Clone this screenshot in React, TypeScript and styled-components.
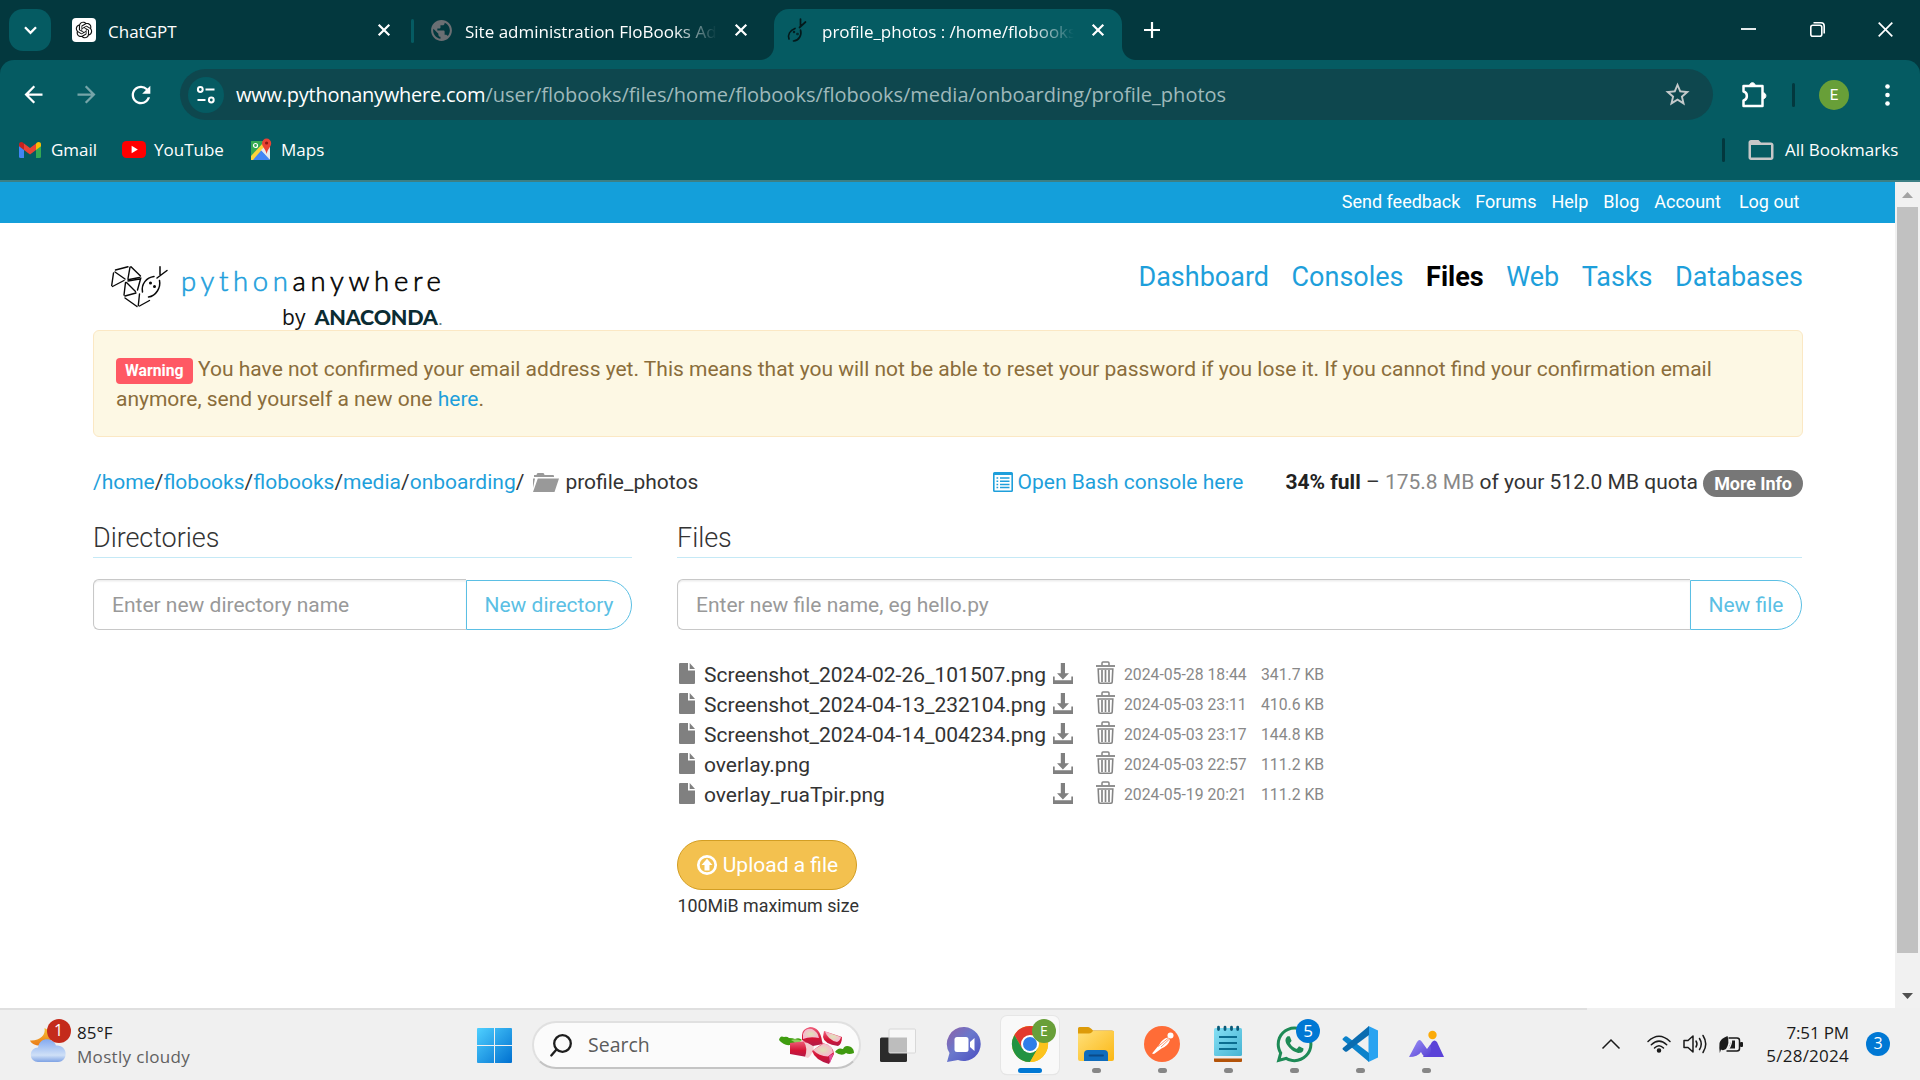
import React from "react";
import styled, { createGlobalStyle } from "styled-components";
import { RiOpenaiFill } from "react-icons/ri";
import { MdPublic, MdArrowBack, MdArrowForward, MdRefresh, MdStarBorder, MdFolderOpen } from "react-icons/md";
import { FaWhatsapp } from "react-icons/fa";

const UI = `"Open Sans", "Noto Sans", sans-serif`;
const WEB = `Roboto, "Liberation Sans", sans-serif`;

const Global = createGlobalStyle`
  * { box-sizing: border-box; }
  html, body { margin: 0; padding: 0; background: #fff; }
  body { width: 1920px; height: 1080px; overflow: hidden; }
  svg { display: block; flex: none; overflow: visible; }
`;

const Screen = styled.div`
  width: 1920px;
  height: 1080px;
  display: flex;
  flex-direction: column;
  overflow: hidden;
`;

/* ---------- browser chrome ---------- */

const TabStrip = styled.div`
  height: 60px;
  flex: none;
  display: flex;
  align-items: flex-start;
  background: #03383e;
  padding: 9px 0 0 9px;
  font-family: ${UI};
`;

const TabSearch = styled.div`
  width: 42px;
  height: 42px;
  border-radius: 14px;
  background: #055b62;
  display: flex;
  align-items: center;
  justify-content: center;
`;

const Tab = styled.div<{ $width: number; $active?: boolean; $pad: number; $end?: number }>`
  position: relative;
  width: ${(p) => p.$width}px;
  height: 51px;
  display: flex;
  align-items: flex-start;
  padding: 9px ${(p) => p.$end ?? 18}px 0 ${(p) => p.$pad}px;
  border-radius: 15px 15px 0 0;
  background: ${(p) => (p.$active ? "#055b62" : "transparent")};
  &::before,
  &::after {
    content: "";
    display: ${(p) => (p.$active ? "block" : "none")};
    position: absolute;
    bottom: 0;
    width: 14px;
    height: 14px;
  }
  &::before {
    left: -14px;
    background: radial-gradient(circle at 0 0, transparent 13.5px, #055b62 14.5px);
  }
  &::after {
    right: -14px;
    background: radial-gradient(circle at 100% 0, transparent 13.5px, #055b62 14.5px);
  }
`;

const TabIcon = styled.div<{ $gap: number }>`
  width: 24px;
  height: 24px;
  flex: none;
  margin-right: ${(p) => p.$gap}px;
`;

const OpenAiTile = styled.div`
  width: 24px;
  height: 24px;
  border-radius: 4px;
  background: #fff;
  color: #111;
  display: flex;
  align-items: center;
  justify-content: center;
`;

const TabTitle = styled.div<{ $fade?: boolean }>`
  flex: 1;
  height: 26px;
  margin-top: 1px;
  line-height: 26px;
  font-size: 17px;
  color: #fff;
  white-space: nowrap;
  overflow: hidden;
  ${(p) => p.$fade && "mask-image: linear-gradient(90deg, #000 calc(100% - 44px), transparent);"}
`;

const CloseMark = styled.div<{ $gap: number }>`
  margin: 6px 0 0 ${(p) => p.$gap}px;
  width: 12px;
`;

const TabDivider = styled.div`
  width: 3px;
  height: 24px;
  margin-top: 10px;
  border-radius: 2px;
  background: #055b62;
`;

const NewTab = styled.div`
  margin: 13px 0 0 22px;
`;

const WindowControls = styled.div`
  margin: 13px 27px 0 auto;
  display: flex;
  gap: 53.5px;
`;

const ToolbarShell = styled.div`
  flex: none;
  background: #03383e;
`;

const ToolbarPanel = styled.div`
  height: 122px;
  border-radius: 14px 14px 0 0;
  background: #055b62;
  border-bottom: 2px solid #3d7f84;
  font-family: ${UI};
`;

const NavRow = styled.div`
  height: 69px;
  display: flex;
  align-items: center;
  padding-left: 20px;
  color: #fff;
`;

const NavButton = styled.div<{ $dim?: boolean; $gap: number }>`
  width: 27px;
  height: 27px;
  margin-right: ${(p) => p.$gap}px;
  opacity: ${(p) => (p.$dim ? 0.45 : 1)};
`;

const Omnibox = styled.div`
  width: 1533px;
  height: 51px;
  border-radius: 26px;
  background: #0e474e;
  display: flex;
  align-items: center;
  padding: 0 21px 0 8px;
`;

const SiteInfo = styled.div`
  width: 36px;
  height: 36px;
  border-radius: 50%;
  background: #055b62;
  display: flex;
  align-items: center;
  justify-content: center;
  margin-right: 12px;
`;

const Url = styled.div`
  flex: 1;
  font-size: 20px;
  line-height: 30px;
  color: #9fb9bb;
  white-space: nowrap;
  letter-spacing: 0.008px;
  b {
    font-weight: 400;
    letter-spacing: -0.25px;
    color: #fff;
  }
`;

const VerticalRule = styled.div<{ $margin: string }>`
  width: 3px;
  height: 24px;
  flex: none;
  border-radius: 2px;
  background: #03383e;
  margin: ${(p) => p.$margin};
`;

const Avatar = styled.div`
  width: 30px;
  height: 30px;
  border-radius: 50%;
  background: #689f38;
  color: #fff;
  font: 15px/30px ${WEB};
  text-align: center;
`;

const BookmarkRow = styled.div`
  height: 41px;
  display: flex;
  align-items: center;
  padding-left: 18px;
  color: #fff;
  font-size: 17px;
  line-height: 24px;
`;

const Bookmark = styled.div<{ $width: number; $gap: number; $pad?: number }>`
  width: ${(p) => p.$width}px;
  padding-left: ${(p) => p.$pad ?? 0}px;
  flex: none;
  display: flex;
  align-items: center;
  gap: ${(p) => p.$gap}px;
  white-space: nowrap;
`;

/* ---------- web page ---------- */

const Viewport = styled.div`
  height: 826px;
  flex: none;
  display: flex;
`;

const Page = styled.div`
  width: 1895px;
  background: #fff;
  font: 21px/30px ${WEB};
  color: #333;
`;

const AccountBar = styled.div`
  height: 41px;
  background: #149fda;
  display: flex;
  justify-content: flex-end;
  align-items: center;
  gap: 15px;
  padding: 0 95.5px 2px 0;
  font-size: 18px;
  color: #fff;
`;

const AccountLink = styled.span<{ $extra?: number }>`
  margin-left: ${(p) => p.$extra ?? 0}px;
`;

const Content = styled.div`
  margin-left: 93px;
  width: 1710px;
`;

const Header = styled.div`
  height: 107px;
  display: flex;
  justify-content: space-between;
`;

const Brand = styled.div`
  display: flex;
  padding: 43px 0 0 18px;
`;

const Wordmark = styled.div`
  width: 261px;
  margin-left: 12px;
  display: flex;
  flex-direction: column;
`;

const WordName = styled.div`
  font: 300 27.5px/29px Lato, "Open Sans", sans-serif;
  letter-spacing: 4.65px;
  color: #000;
  white-space: nowrap;
  -webkit-text-stroke: 0.6px currentColor;
  span {
    color: #1f9fdc;
    -webkit-text-stroke: 0.6px #1f9fdc;
  }
`;

const WordOwner = styled.div`
  margin-top: 10px;
  align-self: flex-end;
  display: flex;
  align-items: baseline;
  font: 21px/25px "Open Sans", sans-serif;
  color: #111;
  b {
    margin-left: 9px;
    font: 900 21.5px/25px Lato, sans-serif;
    letter-spacing: -0.25px;
    color: #0b2c33;
  }
  i {
    margin-left: 1px;
    font: 700 14px/25px Lato, sans-serif;
    color: #6f8285;
  }
`;

const MainNav = styled.nav`
  display: flex;
  gap: 22.5px;
  padding-top: 35px;
  font-size: 27px;
  line-height: 38px;
`;

const MainLink = styled.span<{ $active?: boolean }>`
  color: ${(p) => (p.$active ? "#000" : "#1e9fdb")};
  font-weight: ${(p) => (p.$active ? 700 : 400)};
`;

const Alert = styled.div`
  height: 107px;
  padding: 23px 22px;
  border: 1px solid #fbe8c4;
  border-radius: 6px;
  background: #fdf8e4;
  color: #8a6d3b;
`;

const WarningTag = styled.span`
  display: inline-block;
  height: 26px;
  padding: 0 9px;
  margin-right: 5.5px;
  border-radius: 4px;
  background: #ff5964;
  color: #fff;
  font-size: 15.75px;
  font-weight: 700;
  line-height: 25px;
`;

const Link = styled.span`
  color: #1e9fdb;
`;

const PathRow = styled.div`
  margin-top: 30px;
  height: 30px;
  display: flex;
  white-space: nowrap;
`;

const Crumbs = styled.div`
  flex: 1;
  display: flex;
  align-items: center;
`;

const Current = styled.span`
  margin-left: 6px;
`;

const ConsoleLink = styled.div`
  display: flex;
  align-items: center;
  gap: 5px;
  margin-right: 42px;
  color: #1e9fdb;
`;

const Quota = styled.div`
  display: flex;
  align-items: center;
  white-space: pre;
  b {
    color: #222;
  }
  span {
    color: #888;
  }
`;

const InfoBadge = styled.div`
  width: 100px;
  height: 27px;
  margin: 3px 0 0 5px;
  border-radius: 14px;
  background: #777;
  color: #fff;
  font-size: 18px;
  font-weight: 700;
  line-height: 27px;
  text-align: center;
  letter-spacing: -0.1px;
`;

const Columns = styled.div`
  margin-top: 20px;
  display: grid;
  grid-template-columns: 539px 1125px;
  column-gap: 45px;
`;

const Heading = styled.h2`
  margin: 0 0 21px;
  padding-top: 2px;
  border-bottom: 1px solid #c5e9f6;
  font-size: 27px;
  font-weight: 300;
  line-height: 38px;
  letter-spacing: -0.05px;
  color: #333;
`;

const InputGroup = styled.div`
  height: 51px;
  display: flex;
`;

const FakeInput = styled.div`
  flex: 1;
  border: 1px solid #c8c8c8;
  border-right: 0;
  border-radius: 6px 0 0 6px;
  box-shadow: inset 0 1.5px 1.5px rgba(0, 0, 0, 0.075);
  padding-left: 18px;
  line-height: 50px;
  color: #999;
`;

const OutlineButton = styled.div<{ $width: number }>`
  width: ${(p) => p.$width}px;
  height: 50px;
  margin-top: 1px;
  border: 1px solid #5bbfe4;
  border-radius: 0 25px 25px 0;
  color: #5bbfe4;
  line-height: 48px;
  text-align: center;
`;

const FileList = styled.div`
  margin-top: 30px;
`;

const FileRow = styled.div`
  height: 30px;
  display: grid;
  grid-template-columns: 27px 348px 44px 28px 137px 100px;
  align-items: center;
  white-space: nowrap;
`;

const IconCell = styled.div<{ $pad?: number; $shift?: number }>`
  padding-left: ${(p) => p.$pad ?? 0}px;
  margin-top: ${(p) => p.$shift ?? -3}px;
`;

const Meta = styled.div`
  font-size: 15.75px;
  color: #888;
  margin-top: -1px;
`;

const UploadButton = styled.div`
  margin-top: 30px;
  width: 180px;
  height: 50px;
  border: 1.5px solid #d39e23;
  border-radius: 25px;
  background: #f3c14f;
  color: #fff;
  display: flex;
  align-items: center;
  justify-content: center;
  gap: 6px;
  padding-left: 1px;
`;

const Hint = styled.div`
  margin-top: 3px;
  padding-left: 0.5px;
  font-size: 17.85px;
  line-height: 26px;
`;

const ScrollTrack = styled.div`
  width: 25px;
  background: #f1f1f1;
  display: flex;
  flex-direction: column;
  align-items: center;
`;

const Arrow = styled.div<{ $down?: boolean }>`
  height: 25px;
  flex: none;
  padding-top: ${(p) => (p.$down ? 10 : 10)}px;
`;

const Thumb = styled.div`
  width: 21px;
  height: 746px;
  flex: none;
  margin-bottom: 30px;
  background: #c1c1c1;
`;

/* ---------- taskbar ---------- */

const Taskbar = styled.div`
  position: relative;
  height: 72px;
  flex: none;
  display: flex;
  align-items: center;
  padding-top: 2px;
  background: #f0f0f0;
  font-family: ${UI};
  &::before {
    content: "";
    position: absolute;
    top: 0;
    left: 0;
    width: 1587px;
    height: 2px;
    background: #dfdfdf;
  }
`;

const Weather = styled.div`
  width: 477px;
  flex: none;
  padding-left: 30px;
  display: flex;
  gap: 11px;
  align-items: center;
`;

const Stack = styled.div<{ $align?: string; $lh: number }>`
  display: flex;
  flex-direction: column;
  text-align: ${(p) => p.$align ?? "left"};
  font-size: 17px;
  line-height: ${(p) => p.$lh}px;
  color: #1a1a1a;
  white-space: nowrap;
`;

const Line = styled.span<{ $muted?: boolean; $spacing?: number }>`
  color: ${(p) => (p.$muted ? "#606060" : "#1a1a1a")};
  letter-spacing: ${(p) => p.$spacing ?? 0}px;
`;

const Badge = styled.div<{ $bg: string; $float?: boolean; $size?: number; $right?: number; $top?: number }>`
  ${(p) => p.$float && `position: absolute; top: ${p.$top ?? -7}px; right: ${p.$right ?? -8}px;`}
  width: 24px;
  height: 24px;
  border-radius: 50%;
  background: ${(p) => p.$bg};
  color: #fff;
  font-size: ${(p) => p.$size ?? 16}px;
  line-height: 23px;
  text-align: center;
`;

const AppIcon = styled.div`
  position: relative;
  width: 36px;
  height: 36px;
  display: flex;
  align-items: center;
  justify-content: center;
`;

const SearchBox = styled.div`
  width: 329px;
  height: 48px;
  flex: none;
  margin: 0 19px 0 20px;
  border: 2px solid #e0e0e0;
  border-bottom-color: #c4c4c4;
  border-radius: 24px;
  background: #fbfbfb;
  display: flex;
  align-items: center;
  padding: 0 5px 0 16px;
  color: #5c5c5c;
  font-size: 19.5px;
`;

const SearchLabel = styled.span`
  flex: 1;
  margin-left: 16px;
  line-height: 28px;
`;

const AppRow = styled.div`
  display: flex;
  margin-left: 19px;
`;

const Slot = styled.div<{ $active?: boolean }>`
  width: 58px;
  height: 58px;
  margin: 0 8px 0 0;
  display: flex;
  flex-direction: column;
  align-items: center;
  padding-top: 10px;
  border-radius: 6px;
  background: ${(p) => (p.$active ? "#f9f9f9" : "transparent")};
  box-shadow: ${(p) => (p.$active ? "0 0 0 1px #e6e6e6, 0 1px 1px #d8d8d8" : "none")};
`;

const Running = styled.div<{ $state: "none" | "open" | "focused" }>`
  width: ${(p) => (p.$state === "focused" ? 24 : 9)}px;
  height: 5px;
  margin-top: 6px;
  border-radius: 3px;
  background: ${(p) => (p.$state === "focused" ? "#0078d4" : p.$state === "open" ? "#868686" : "transparent")};
`;

const Tray = styled.div`
  margin-left: auto;
  padding: 0 30px 2px 0;
  display: flex;
  align-items: center;
`;

const Inset = styled.div<{ $margin: string }>`
  margin: ${(p) => p.$margin};
`;

/* ---------- drawings ---------- */

const Cross = ({ size = 12, w = 2.2 }: { size?: number; w?: number }) => (
  <svg width={size} height={size} viewBox={`0 0 ${size} ${size}`} stroke="#fff" strokeWidth={w} fill="none">
    <path d={`M.7 .7 L${size - 0.7} ${size - 0.7} M${size - 0.7} .7 L.7 ${size - 0.7}`} />
  </svg>
);

const SnakeFavicon = () => (
  <svg width="24" height="24" viewBox="0 0 24 24" fill="none" stroke="#04191b" strokeWidth="1.7" strokeLinecap="round">
    <path d="M12.500 1v6.500M17.500 4l-6 5.500M7 10.500C2 12.500-.5 16.500 1 21M12.500 12c1.500 5-1.500 10.500-7 11" />
    <circle cx="6" cy="14" r=".4" />
    <circle cx="9.500" cy="16" r=".4" />
  </svg>
);

const TuneIcon = () => (
  <svg width="19" height="18" viewBox="0 0 19 18" fill="none" stroke="#fff" strokeWidth="2">
    <circle cx="3.300" cy="3.500" r="2.400" />
    <path d="M8.500 3.500h9M.5 14h8" />
    <circle cx="14.300" cy="14" r="2.400" />
  </svg>
);

const PuzzleIcon = () => (
  <svg width="26" height="26" viewBox="0 0 26 26" fill="none" stroke="#fff" strokeWidth="2.5" strokeLinejoin="round">
    <path d="M2.500 4H21.500V24H2.500V18.500C7 17.500 7 10.500 2.500 9.500Z" />
    <path d="M8.600 3.600C8.800-.3 14 -.3 14.200 3.600ZM22.200 10.800c3.600.2 3.600 5.800 0 6Z" fill="#fff" strokeWidth="1" />
  </svg>
);

const GmailIcon = () => (
  <svg width="22" height="16" viewBox="0 0 22 16">
    <path d="M0 3v11.500Q0 16 1.500 16H5V7Z" fill="#4285f4" />
    <path d="M17 7v9h3.500q1.500 0 1.500-1.500V3Z" fill="#34a853" />
    <path d="M5 1.500 11 6l6-4.500V8l-6 4.500L5 8Z" fill="#ea4335" />
    <path d="M0 2.500C0 0 2.600-.5 4 .6L5 1.500V8L0 4.300Z" fill="#c5221f" />
    <path d="M22 2.500c0-2.500-2.600-3-4-1.900l-1 .9V8l5-3.700Z" fill="#fbbc04" />
  </svg>
);

const YouTubeIcon = () => (
  <svg width="24" height="17" viewBox="0 0 24 17">
    <rect width="24" height="17" rx="4.5" fill="#f00" />
    <path d="M9.600 4.800v7.400l6.200-3.700Z" fill="#fff" />
  </svg>
);

const MapsIcon = () => (
  <svg width="22" height="23" viewBox="0 0 22 23">
    <rect x="1" y="3" width="19" height="19" rx="1.5" fill="#d9dde1" />
    <path d="M1 3h14L1 20Z" fill="#34a853" />
    <path d="M1 22 11 12l9 10Z" fill="#4285f4" />
    <path d="M1 18 14 4l2 3L3 22H1Z" fill="#fdd33c" />
    <path d="M11 12 16 8l4 4v9Z" fill="#e6e9ec" />
    <circle cx="5.500" cy="7.500" r="2" fill="none" stroke="#fff" strokeWidth="1.2" />
    <path d="M12 5.200a4.600 4.600 0 0 1 9.200 0c0 3.500-3.600 5.300-4.600 10.800C15.600 10.500 12 8.700 12 5.200Z" fill="#ea4335" />
    <circle cx="16.600" cy="5" r="1.600" fill="#8e1b13" />
  </svg>
);

const SnakeLogo = () => (
  <svg width="58" height="42" viewBox="0 0 58 42" fill="none" stroke="#0a0a0a" strokeWidth="1.4" strokeLinecap="round">
    <path d="M4.500 4 17 .8M20 .7 29.500 10M19 1.200 17 12.500M4 6 14 13M2.500 7 .7 19.500M1.500 20.500 13 14.500M17 13.700 28.500 11.500" />
    <path d="M14.500 16.500 13 29M15.500 16.500 24.500 25.500M29.800 12 26.500 24M28.500 13 17 15M14 30 25 27M14 32 26 40.500M28.500 28 27.300 39.500M28.500 40 38.500 34.500" />
    <path d="M43 10.500C35.500 11.500 30 18 31.500 26M48.500 14.500c1.500 7-3.500 15.500-11 16.500M49 .8v7.700M56 4.500 46 12" strokeWidth="1.5" />
    <circle cx="39.500" cy="17" r=".8" fill="#000" />
    <circle cx="43.500" cy="20.500" r=".8" fill="#000" />
  </svg>
);

const FolderOpenGlyph = () => (
  <svg width="26" height="19" viewBox="0 0 26 19" fill="#999">
    <path d="M1 4V2h2.500L4 .5Q4.300 0 5 0h5q.7 0 1 .6L11.500 2H20q1 0 1 1v1Z" />
    <path d="M0 5.500h2L0 15ZM4.800 5.500H26L21.500 19H0Z" />
  </svg>
);

const ConsoleGlyph = () => (
  <svg width="20" height="20" viewBox="0 0 20 20">
    <path fillRule="evenodd" fill="#1e9fdb" d="M1.500 0h17Q20 0 20 1.500v17q0 1.500-1.500 1.500h-17Q0 20 0 18.500v-17Q0 0 1.500 0ZM1.600 3v15.400h16.800V3Z" />
    <path d="M3.500 6h1.700M7 6h9.500M3.500 9.200h1.700M7 9.200h9.500M3.500 12.400h1.700M7 12.400h9.500M3.500 15.600h1.700M7 15.600h9.500" stroke="#1e9fdb" strokeWidth="1.5" />
  </svg>
);

const FileGlyph = () => (
  <svg width="16" height="21" viewBox="0 0 16 21" fill="#808080">
    <path d="M0 1Q0 0 1 0h8v7.500h7V20q0 1-1 1H1q-1 0-1-1Z" />
    <path d="M10.700 0 16 6H10.700Z" />
  </svg>
);

const DownloadGlyph = () => (
  <svg width="20" height="21" viewBox="0 0 20 21" fill="#808080">
    <path d="M7.800 0h4.200v10.200h4L9.900 16.500 4 10.200h3.800Z" />
    <path d="M0 13.500h1.700V17.200h16.600v-3.700H20V21H0Z" />
  </svg>
);

const TrashGlyph = () => (
  <svg width="19" height="23" viewBox="0 0 19 23" fill="none" stroke="#858585">
    <path d="M6 4.500V2Q6 .9 7 .9h5q1 0 1 1.100v2.500" strokeWidth="1.5" />
    <path d="M0 5h19" strokeWidth="1.8" />
    <path d="M2.200 8h14.600L16.200 21q0 1.200-1.200 1.200H4Q2.800 22.200 2.800 21Z" strokeWidth="1.6" />
    <path d="M6 9v12M9.500 9v12M13 9v12" strokeWidth="1.7" />
  </svg>
);

const UploadGlyph = () => (
  <svg width="20" height="20" viewBox="0 0 20 20">
    <circle cx="10" cy="10" r="8.700" fill="none" stroke="#fff" strokeWidth="2.7" />
    <path d="M10 3.800 15.500 10H12.500v5.500h-5V10h-3Z" fill="#fff" />
  </svg>
);

const WeatherIcon = () => (
  <svg width="36" height="36" viewBox="0 0 36 36">
    <defs>
      <linearGradient id="moon" x1="0" y1="0" x2="0" y2="1">
        <stop offset="0" stopColor="#f7c234" />
        <stop offset="1" stopColor="#ea7a17" />
      </linearGradient>
      <linearGradient id="cloud" x1="0" y1="0" x2="0" y2="1">
        <stop offset="0" stopColor="#84aaf0" />
        <stop offset=".7" stopColor="#cfe0f7" />
        <stop offset="1" stopColor="#7ea2e4" />
      </linearGradient>
    </defs>
    <path d="M14.500 1C16 8 10 14 0 13.500 3 20 16 21 22 12L18 3Z" fill="url(#moon)" />
    <path d="M8 35a7 7 0 0 1 0-14.500C9.500 10 23 10 26 18.500c12-1 13 16 2 16.500Z" fill="url(#cloud)" />
  </svg>
);

const WindowsLogo = () => (
  <svg width="35" height="35" viewBox="0 0 35 35">
    <defs>
      <linearGradient id="win" x1="0" y1="0" x2="1" y2="1">
        <stop offset="0" stopColor="#4fd0ff" />
        <stop offset="1" stopColor="#0070d0" />
      </linearGradient>
    </defs>
    <path d="M1 0h16v17H0V1Q0 0 1 0ZM18 0h16q1 0 1 1v16H18ZM0 18h17v17H1q-1 0-1-1ZM18 18h17v16q0 1-1 1H18Z" fill="url(#win)" />
  </svg>
);

const Magnifier = () => (
  <svg width="22" height="23" viewBox="0 0 22 23" fill="none" stroke="#1d1d1d" strokeWidth="2.3" strokeLinecap="round">
    <circle cx="12.500" cy="9.500" r="8.300" />
    <path d="M6.500 15.500 1.300 21.500" />
  </svg>
);

const Radishes = () => (
  <svg width="75" height="37" viewBox="0 0 75 37">
    <defs>
      <radialGradient id="flesh">
        <stop offset="0" stopColor="#dfe3b8" />
        <stop offset="1" stopColor="#f7b6cd" />
      </radialGradient>
      <linearGradient id="skin" x1="0" y1="0" x2="0" y2="1">
        <stop offset="0" stopColor="#f0607c" />
        <stop offset=".6" stopColor="#d31334" />
        <stop offset="1" stopColor="#b01a4a" />
      </linearGradient>
    </defs>
    <path d="M0 13q1-5 5-3 3-1 5 1 4 0 6 1 4-2 7 1l-5 3q-4-1-7 2-6 1-11-5Z" fill="#3f9d10" />
    <path d="M12 13q5-2 11 1l-6 2Z" fill="#8fcf5c" />
    <path d="M56 25q3-5 8-3 2-5 8-2 3 2 3 6-5 2-8 0-4 4-11-1Z" fill="#3f9a10" />
    <path d="M11 16 27 14q4 6 1 16L11 27Z" fill="url(#skin)" />
    <path d="M25 15q4 6 1 15l3 1q5-4 6-12Z" fill="#f3cdd0" />
    <path d="M23 8q0-6 8-8 10 0 12 14l1 3-10 2-11-6Z" fill="url(#skin)" />
    <path d="M24 7q2-6 9-5 6 3 7 9-9-2-16 1Z" fill="url(#flesh)" />
    <path d="M45 4 63 10q0 7-4 9-14-2-15-9Z" fill="url(#skin)" />
    <path d="M46 4.500 62 10q-1 4-4 5-9-2-12-10.500Z" fill="url(#flesh)" />
    <path d="M33 24 44 16q11 3 11 11l-5 10Q36 33 33 24Z" fill="url(#skin)" />
    <path d="M34 23 45 16.500q9 2 9 9l-5 4Q40 29 34 23Z" fill="url(#flesh)" />
    <path d="M50 29l4.500-2.500L51 36Z" fill="#e2509c" />
  </svg>
);

const TaskView = () => (
  <svg width="36" height="35" viewBox="0 0 36 35">
    <rect x="0" y="9.500" width="27" height="24.500" rx="1.500" fill="#2b2b2b" />
    <rect x="9" y="1" width="26.500" height="24" rx="1" fill="#f7f7f7" stroke="#d8d8d8" />
    <path d="M9 9.500h18V24.500H9Z" fill="#bdbdbd" />
  </svg>
);

const ChatIcon = () => (
  <svg width="35" height="36" viewBox="0 0 35 36">
    <defs>
      <linearGradient id="chat" x1="0" y1="0" x2="1" y2="1">
        <stop offset="0" stopColor="#9060a6" />
        <stop offset=".45" stopColor="#6a78cc" />
        <stop offset="1" stopColor="#4a4cc0" />
      </linearGradient>
    </defs>
    <path d="M17.500 1a17 17 0 1 1-6.500 33L0 36 2.500 27A17 17 0 0 1 17.500 1Z" fill="url(#chat)" />
    <rect x="7.500" y="11" width="14" height="15" rx="2.500" fill="#fff" />
    <path d="M23 16l4.500-4v13L23 21Z" fill="#fff" />
  </svg>
);

const ChromeIcon = () => (
  <svg width="36" height="36" viewBox="0 0 36 36">
    <circle cx="18" cy="18" r="18" fill="#fbbc05" />
    <path d="M2.400 9A18 18 0 0 1 33.600 9H18L10.200 22.500Z" fill="#e23a2e" />
    <path d="M2.400 9A18 18 0 0 0 18 36L25.800 22.500 10.200 22.500Z" fill="#229342" />
    <path d="M18 36A18 18 0 0 0 33.600 9H18L25.800 22.500Z" fill="#fcc31e" />
    <circle cx="18" cy="18" r="9" fill="#fff" />
    <circle cx="18" cy="18" r="7" fill="#2f7de9" />
  </svg>
);

const ExplorerIcon = () => (
  <svg width="36" height="34" viewBox="0 0 36 34">
    <defs>
      <linearGradient id="fold" x1="0" y1="0" x2="1" y2="1">
        <stop offset="0" stopColor="#ffe07a" />
        <stop offset="1" stopColor="#fbb714" />
      </linearGradient>
    </defs>
    <path d="M0 1.500Q0 0 1.500 0H10q2 0 5 3.500H34q2 0 2 2V10H0Z" fill="#dd9b09" />
    <path d="M0 6.500h11Q13 6.500 15 4h21v28q0 2-2 2H2q-2 0-2-2Z" fill="url(#fold)" />
    <path d="M6 34V27q0-4 4-4h16q4 0 4 4v7Z" fill="#0f6cbd" />
    <path d="M11.500 28.500h13.500" stroke="#0b4a88" strokeWidth="1.8" strokeLinecap="round" />
  </svg>
);

const PostmanIcon = () => (
  <svg width="36" height="36" viewBox="0 0 36 36">
    <circle cx="18" cy="18" r="18" fill="#ff6c37" />
    <circle cx="26.500" cy="9.500" r="3" fill="#fff" />
    <path d="M15 19q3-6 8.500-7.500l2.500 2.500q-2 6-8.500 8.500L10 28l-2-.5Z" fill="#fff" />
    <path d="M14 20.500 24 12.500M17 21 25 13.500" stroke="#ff6c37" strokeWidth=".7" />
  </svg>
);

const NotepadIcon = () => (
  <svg width="28" height="36" viewBox="0 0 28 36">
    <defs>
      <linearGradient id="note" x1="0" y1="0" x2="1" y2="1">
        <stop offset="0" stopColor="#85e0f5" />
        <stop offset="1" stopColor="#46b4d3" />
      </linearGradient>
    </defs>
    <path d="M0 31h28v4q0 1-1 1H1q-1 0-1-1Z" fill="#b35309" />
    <path d="M0 28h28v4.500H0Z" fill="#eee" />
    <rect x="0" y="2" width="28" height="28" rx="1.500" fill="url(#note)" />
    <path d="M5 11h18M5 17h18M5 23h18" stroke="#0b6d90" strokeWidth="1.9" />
    <path d="M4.500 1.200v2.300M11 1.200v2.300M17.500 1.200v2.300M23.700 1.200v2.300" stroke="#0b5a78" strokeWidth="2.8" strokeLinecap="round" />
  </svg>
);

const VsCodeIcon = () => (
  <svg width="36" height="36" viewBox="0 0 36 36">
    <path d="M26.500 0 36 4.500V31.500L26.500 36Z" fill="#29a3f1" />
    <path d="M.8 12.500 3 10.500q1-.6 2 0L27 27v9L.8 14Q.2 13.200.8 12.500Z" fill="#0b82cb" />
    <path d="M.8 23.500 3 25.500q1 .6 2 0L27 9V0L.8 22Q.2 22.800.8 23.500Z" fill="#0a6cb0" />
  </svg>
);

const PeaksIcon = () => (
  <svg width="35" height="27" viewBox="0 0 35 27">
    <defs>
      <linearGradient id="peak" x1="0" y1="0" x2="1" y2="1">
        <stop offset="0" stopColor="#9d92f7" />
        <stop offset="1" stopColor="#5540d3" />
      </linearGradient>
    </defs>
    <circle cx="23.500" cy="4" r="4.200" fill="#fbab09" />
    <path d="M14 26 23 11q2.500-3 5 0L35 26Z" fill="#5b43d8" />
    <path d="M0 26 8 11q2.500-4 5 0l5 7 3-4q3 8-3 11-3 2-6-4-3 5-12 5Z" fill="url(#peak)" />
  </svg>
);

const WifiIcon = () => (
  <svg width="24" height="18" viewBox="0 0 24 18" fill="none" stroke="#1a1a1a" strokeWidth="1.5" strokeLinecap="round">
    <path d="M1 6.500Q12-4 23 6.500M4.300 9.800Q12 2.500 19.700 9.800M7.500 13Q12 8.500 16.500 13" />
    <circle cx="12" cy="15.500" r="1.500" fill="#1a1a1a" />
  </svg>
);

const SpeakerIcon = () => (
  <svg width="24" height="20" viewBox="0 0 24 20" fill="none" stroke="#1a1a1a" strokeWidth="1.5" strokeLinecap="round" strokeLinejoin="round">
    <path d="M1 6.500h4L10 2v16L5 13.500H1Z" />
    <path d="M13 7q2 3 0 6M16.500 4.500q3.500 5.500 0 11M20 1.500q5.500 8.500 0 17" />
  </svg>
);

const BatteryIcon = () => (
  <svg width="24" height="17" viewBox="0 0 24 17">
    <path d="M9.500 2H18q2.500 0 2.500 2.500v8q0 2.500-2.500 2.500H7.500" fill="none" stroke="#1a1a1a" strokeWidth="1.5" />
    <rect x="21" y="6" width="3" height="5" rx="1" fill="#1a1a1a" />
    <path d="M12.500 4.500h3.500v8H9.500Z" fill="#1a1a1a" />
    <path d="M8.500 0Q11 7 7 13q-3 2-5 .5L.8 17Q0 12 .5 7 1.500 2.500 8.500 0Z" fill="#1a1a1a" />
    <path d="M12.300 3q.7 5-2.800 10" stroke="#f0f0f0" strokeWidth="1.4" fill="none" />
  </svg>
);

/* ---------- data ---------- */

const FILES = [
  ["Screenshot_2024-02-26_101507.png", "2024-05-28 18:44", "341.7 KB"],
  ["Screenshot_2024-04-13_232104.png", "2024-05-03 23:11", "410.6 KB"],
  ["Screenshot_2024-04-14_004234.png", "2024-05-03 23:17", "144.8 KB"],
  ["overlay.png", "2024-05-03 22:57", "111.2 KB"],
  ["overlay_ruaTpir.png", "2024-05-19 20:21", "111.2 KB"],
];

const NAV = ["Dashboard", "Consoles", "Files", "Web", "Tasks", "Databases"];

const APPS: { icon: React.ReactNode; state: "none" | "open" | "focused"; badge?: [string, string, number] }[] = [
  { icon: <ChatIcon />, state: "none" },
  { icon: <ChromeIcon />, state: "focused", badge: ["E", "#689f38", 14] },
  { icon: <ExplorerIcon />, state: "open" },
  { icon: <PostmanIcon />, state: "open" },
  { icon: <NotepadIcon />, state: "open" },
  { icon: <FaWhatsapp size={41} color="#1d8a56" />, state: "open", badge: ["5", "#0078d4", 17] },
  { icon: <VsCodeIcon />, state: "open" },
  { icon: <PeaksIcon />, state: "open" },
];

const BrowserChrome = () => (
  <>
    <TabStrip>
      <TabSearch>
        <svg width="13" height="9" viewBox="0 0 13 9" fill="none" stroke="#fff" strokeWidth="2.3">
          <path d="M1 1.200 6.500 6.800 12 1.200" />
        </svg>
      </TabSearch>
      <Tab $width={360} $pad={21} $end={21}>
        <TabIcon $gap={12}>
          <OpenAiTile><RiOpenaiFill size={20} /></OpenAiTile>
        </TabIcon>
        <TabTitle>ChatGPT</TabTitle>
        <CloseMark $gap={18}><Cross /></CloseMark>
      </Tab>
      <TabDivider />
      <Tab $width={360} $pad={15} $end={27}>
        <TabIcon $gap={12}><MdPublic size={25} color="#6b6f73" /></TabIcon>
        <TabTitle $fade>Site administration FloBooks Adm</TabTitle>
        <CloseMark $gap={18}><Cross /></CloseMark>
      </Tab>
      <Tab $width={348} $pad={14} $active>
        <TabIcon $gap={10}><SnakeFavicon /></TabIcon>
        <TabTitle $fade>profile_photos : /home/flobooks</TabTitle>
        <CloseMark $gap={18}><Cross /></CloseMark>
      </Tab>
      <NewTab>
        <svg width="16" height="16" viewBox="0 0 16 16" stroke="#fff" strokeWidth="2.2"><path d="M8 0v16M0 8h16" /></svg>
      </NewTab>
      <WindowControls>
        <svg width="15" height="15" viewBox="0 0 15 15" stroke="#fff" strokeWidth="1.8"><path d="M0 7h15" /></svg>
        <svg width="15" height="15" viewBox="0 0 15 15" fill="none" stroke="#fff" strokeWidth="1.6">
          <rect x=".8" y="3.300" width="11" height="11" rx="2" />
          <path d="M3.500.8H11q3.200 0 3.200 3.200v7.500" />
        </svg>
        <Cross size={15} w={1.7} />
      </WindowControls>
    </TabStrip>
    <ToolbarShell>
      <ToolbarPanel>
        <NavRow>
          <NavButton $gap={26}><MdArrowBack size={27} /></NavButton>
          <NavButton $gap={27} $dim><MdArrowForward size={27} /></NavButton>
          <NavButton $gap={26}><MdRefresh size={28} /></NavButton>
          <Omnibox>
            <SiteInfo><TuneIcon /></SiteInfo>
            <Url><b>www.pythonanywhere.com</b>/user/flobooks/files/home/flobooks/flobooks/media/onboarding/profile_photos</Url>
            <MdStarBorder size={29} color="#c3c9ca" />
          </Omnibox>
          <Inset $margin="0 0 0 28px"><PuzzleIcon /></Inset>
          <VerticalRule $margin="0 24px 0 25px" />
          <Avatar>E</Avatar>
          <Inset $margin="0 0 0 36px">
            <svg width="5" height="22" viewBox="0 0 5 22" fill="#fff">
              <circle cx="2.500" cy="2.500" r="2.300" /><circle cx="2.500" cy="11" r="2.300" /><circle cx="2.500" cy="19.500" r="2.300" />
            </svg>
          </Inset>
        </NavRow>
        <BookmarkRow>
          <Bookmark $width={104} $gap={10} $pad={1}><GmailIcon />Gmail</Bookmark>
          <Bookmark $width={128} $gap={8}><YouTubeIcon />YouTube</Bookmark>
          <Bookmark $width={1472} $gap={9}><MapsIcon />Maps</Bookmark>
          <VerticalRule $margin="0 21px 0 0" />
          <Bookmark $width={160} $gap={9}><MdFolderOpen size={30} color="#c7c7c7" />All Bookmarks</Bookmark>
        </BookmarkRow>
      </ToolbarPanel>
    </ToolbarShell>
  </>
);

const FilesPage = () => (
  <Page>
    <AccountBar>
      {["Send feedback", "Forums", "Help", "Blog", "Account"].map((t) => <AccountLink key={t}>{t}</AccountLink>)}
      <AccountLink $extra={3}>Log out</AccountLink>
    </AccountBar>
    <Content>
      <Header>
        <Brand>
          <SnakeLogo />
          <Wordmark>
            <WordName><span>python</span>anywhere</WordName>
            <WordOwner>by <b>ANACONDA</b><i>.</i></WordOwner>
          </Wordmark>
        </Brand>
        <MainNav>
          {NAV.map((t) => <MainLink key={t} $active={t === "Files"}>{t}</MainLink>)}
        </MainNav>
      </Header>
      <Alert>
        <WarningTag>Warning</WarningTag>
        You have not confirmed your email address yet. This means that you will not be able to reset your password if you lose it. If you cannot find your confirmation email anymore, send yourself a new one <Link>here</Link>.
      </Alert>
      <PathRow>
        <Crumbs>
          <span>
            <Link>/home</Link>/<Link>flobooks</Link>/<Link>flobooks</Link>/<Link>media</Link>/<Link>onboarding</Link>/
          </span>
          <Inset $margin="0 0 0 9px"><FolderOpenGlyph /></Inset>
          <Current>profile_photos</Current>
        </Crumbs>
        <ConsoleLink><ConsoleGlyph />Open Bash console here</ConsoleLink>
        <Quota>
          <b>34% full</b> – <span>175.8 MB</span> of your 512.0 MB quota
          <InfoBadge>More Info</InfoBadge>
        </Quota>
      </PathRow>
      <Columns>
        <div>
          <Heading>Directories</Heading>
          <InputGroup>
            <FakeInput>Enter new directory name</FakeInput>
            <OutlineButton $width={166}>New directory</OutlineButton>
          </InputGroup>
        </div>
        <div>
          <Heading>Files</Heading>
          <InputGroup>
            <FakeInput>Enter new file name, eg hello.py</FakeInput>
            <OutlineButton $width={112}>New file</OutlineButton>
          </InputGroup>
          <FileList>
            {FILES.map(([name, date, size]) => (
              <FileRow key={name}>
                <IconCell $pad={2}><FileGlyph /></IconCell>
                <span>{name}</span>
                <IconCell $pad={0.5}><DownloadGlyph /></IconCell>
                <IconCell $shift={-5}><TrashGlyph /></IconCell>
                <Meta>{date}</Meta>
                <Meta>{size}</Meta>
              </FileRow>
            ))}
          </FileList>
          <UploadButton><UploadGlyph />Upload a file</UploadButton>
          <Hint>100MiB maximum size</Hint>
        </div>
      </Columns>
    </Content>
  </Page>
);

const DesktopTaskbar = () => (
  <Taskbar>
    <Weather>
      <AppIcon><WeatherIcon /><Badge $bg="#c42b1c" $right={-4.5} $top={-8} $float>1</Badge></AppIcon>
      <Stack $lh={24}>
        <Line>85°F</Line>
        <Line $muted $spacing={0.33}>Mostly cloudy</Line>
      </Stack>
    </Weather>
    <WindowsLogo />
    <SearchBox>
      <Magnifier />
      <SearchLabel>Search</SearchLabel>
      <Radishes />
    </SearchBox>
    <TaskView />
    <AppRow>
      {APPS.map((a, i) => (
        <Slot key={i} $active={a.state === "focused"}>
          <AppIcon>
            {a.icon}
            {a.badge && <Badge $bg={a.badge[1]} $size={a.badge[2]} $float>{a.badge[0]}</Badge>}
          </AppIcon>
          <Running $state={a.state} />
        </Slot>
      ))}
    </AppRow>
    <Tray>
      <svg width="18" height="10" viewBox="0 0 18 10" fill="none" stroke="#1a1a1a" strokeWidth="1.5"><path d="M.5 9.500 9 1l8.500 8.500" /></svg>
      <Inset $margin="0 0 0 27px"><WifiIcon /></Inset>
      <Inset $margin="0 0 0 12px"><SpeakerIcon /></Inset>
      <Inset $margin="0 23px 0 12px"><BatteryIcon /></Inset>
      <Stack $align="right" $lh={23}>
        <Line $spacing={-0.15}>7:51 PM</Line>
        <Line $spacing={0.25}>5/28/2024</Line>
      </Stack>
      <Inset $margin="0 0 0 17px"><Badge $bg="#0078d4">3</Badge></Inset>
    </Tray>
  </Taskbar>
);

export default function App() {
  return (
    <Screen>
      <Global />
      <BrowserChrome />
      <Viewport>
        <FilesPage />
        <ScrollTrack>
          <Arrow><svg width="11" height="6" viewBox="0 0 11 6"><path d="M0 6 5.500 0 11 6Z" fill="#a3a3a3" /></svg></Arrow>
          <Thumb />
          <Arrow $down><svg width="11" height="6" viewBox="0 0 11 6"><path d="M0 0h11L5.500 6Z" fill="#505050" /></svg></Arrow>
        </ScrollTrack>
      </Viewport>
      <DesktopTaskbar />
    </Screen>
  );
}
